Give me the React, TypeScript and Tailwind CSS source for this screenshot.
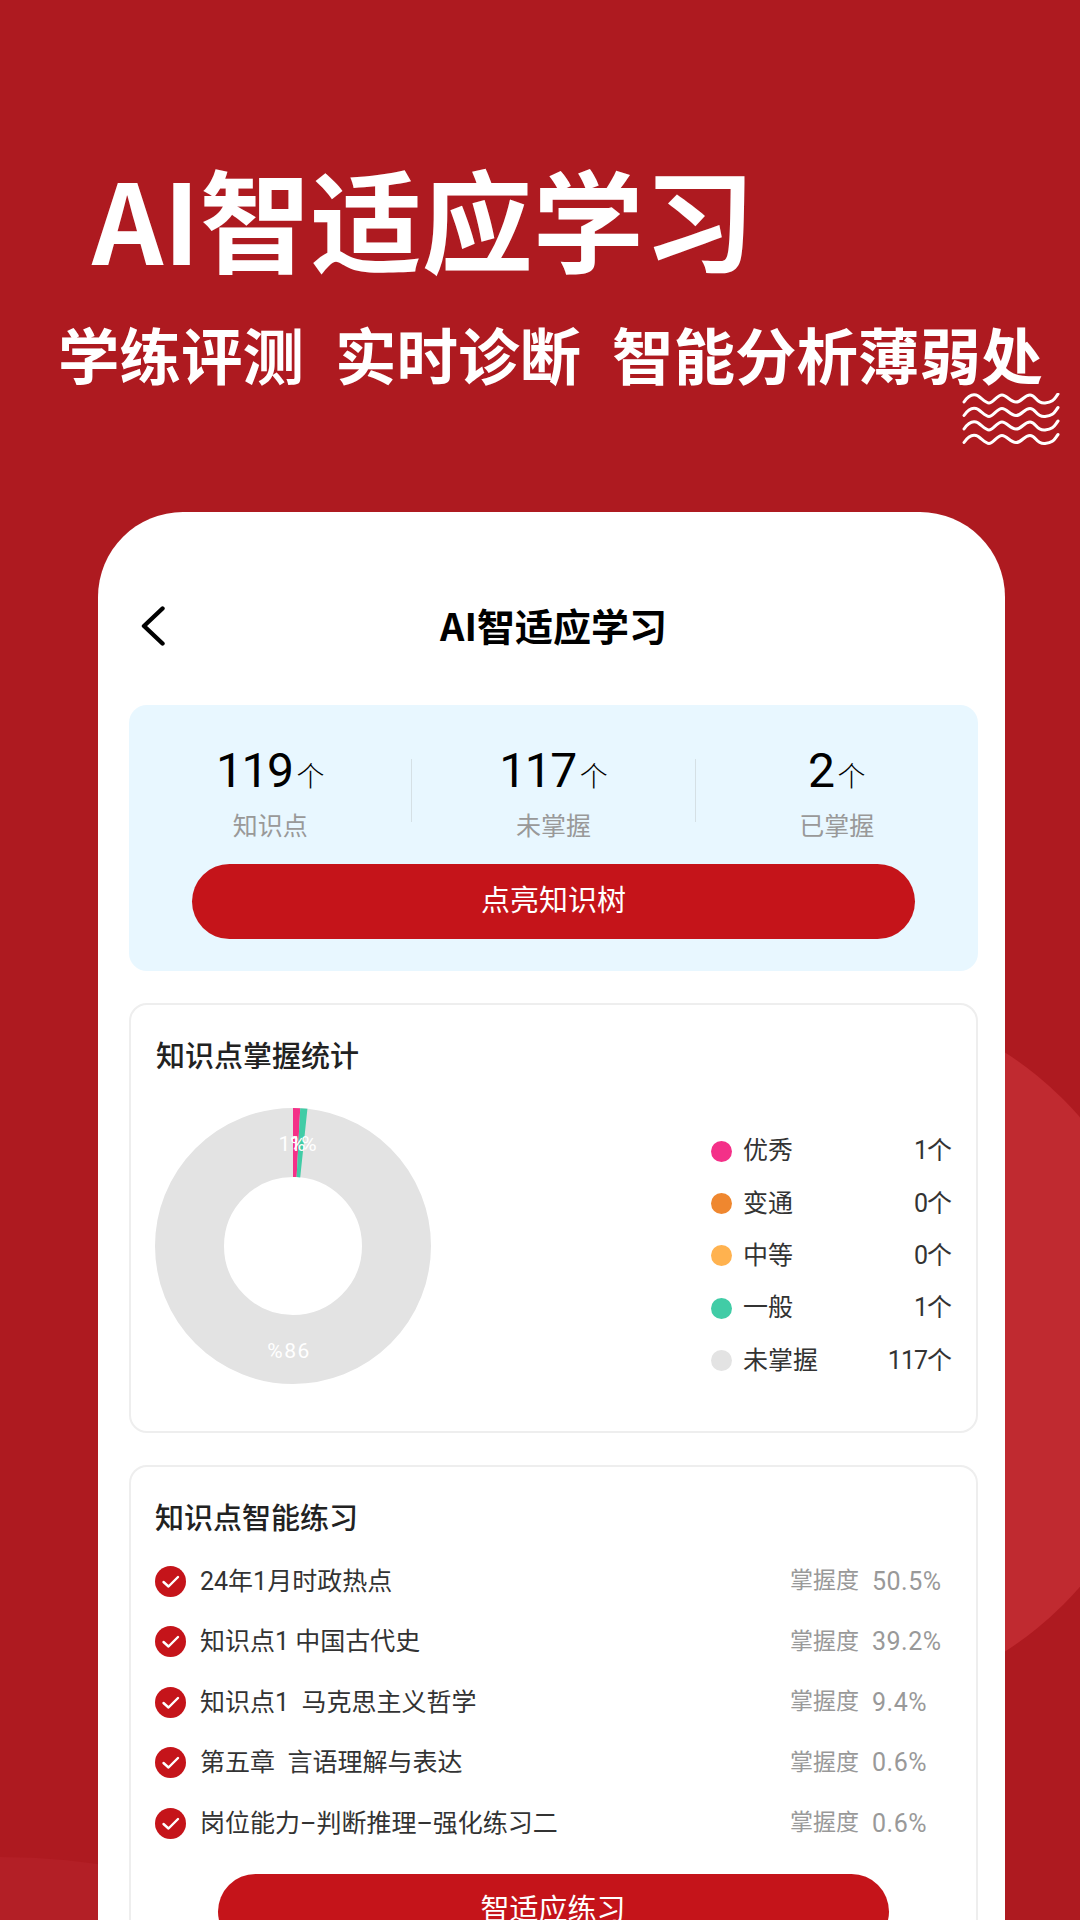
const LEGEND = [
  { label: '优秀', value: '1个', dot: 'bg-[#f43088]' },
  { label: '变通', value: '0个', dot: 'bg-[#ef872f]' },
  { label: '中等', value: '0个', dot: 'bg-[#ffb24f]' },
  { label: '一般', value: '1个', dot: 'bg-[#41cca6]' },
  { label: '未掌握', value: '117个', dot: 'bg-[#e3e3e3]' },
]

const PRACTICE = [
  { name: '24年1月时政热点', rate: '50.5%' },
  { name: '知识点1 中国古代史', rate: '39.2%' },
  { name: '知识点1  马克思主义哲学', rate: '9.4%' },
  { name: '第五章  言语理解与表达', rate: '0.6%' },
  { name: '岗位能力–判断推理–强化练习二', rate: '0.6%' },
]

const STATS = [
  { value: '119', label: '知识点' },
  { value: '117', label: '未掌握' },
  { value: '2', label: '已掌握' },
]

function wedge(from: number, to: number) {
  const C = 138
  const R = 138
  const r = 69
  const pt = (rad: number, deg: number) => {
    const a = (deg * Math.PI) / 180
    return `${C + rad * Math.sin(a)} ${C - rad * Math.cos(a)}`
  }
  return `M${pt(r, from)} L${pt(R, from)} A${R} ${R} 0 0 1 ${pt(R, to)} L${pt(r, to)} A${r} ${r} 0 0 0 ${pt(r, from)}Z`
}

function Donut() {
  return (
    <svg width="276" height="276" viewBox="0 0 276 276" className="-ml-px shrink-0">
      <circle cx="138" cy="138" r="103.5" fill="none" stroke="#e3e3e3" strokeWidth="69" />
      <path d={wedge(0, 3)} fill="#f43088" />
      <path d={wedge(3, 6)} fill="#41cca6" />
      <g fill="#fff" fontSize="21" textAnchor="middle" fontFamily="Roboto, sans-serif">
        <text x="137" y="43">1%</text>
        <text x="148" y="43">1%</text>
        <text x="134" y="250" letterSpacing="1.5">%86</text>
      </g>
    </svg>
  )
}

function CheckBadge() {
  return (
    <svg width="31" height="31" viewBox="0 0 31 31" className="shrink-0">
      <circle cx="15.5" cy="15.5" r="15.5" fill="#c5141a" />
      <path d="M8.5 16 L13.5 20.5 L23 11" fill="none" stroke="#fff" strokeWidth="2.4" strokeLinecap="round" strokeLinejoin="round" />
    </svg>
  )
}

function Waves() {
  return (
    <svg width="98" height="56" viewBox="0 0 98 56" className="ml-auto mr-[20px] mt-[4px] block" fill="none" stroke="#fff" strokeWidth="3" strokeLinecap="round">
      {[0, 13.5, 27, 40.5].map((y) => (
        <path key={y} transform={`translate(2 ${y})`} d="M0 9 C4 3,8 1,12 2 S21 10,25 10 S33 2,38 2 S46 9,52 9 S60 2,66 2 S72 11,81 10 S90 6,94 1" />
      ))}
    </svg>
  )
}

export default function App() {
  return (
    <div className="relative h-[1920px] w-[1080px] overflow-hidden bg-[#ae1a20] font-['Roboto','Noto_Sans_CJK_SC',sans-serif]">
      {/* background shapes */}
      <div className="absolute left-[454px] top-[995px] h-[714px] w-[714px] rounded-full bg-[#c02a30]" />
      <div className="absolute left-[-686px] top-[1857px] h-[1372px] w-[1372px] rounded-full bg-[#b31f26]" />

      <div className="relative flex flex-col">
        <h1 className="ml-[92px] mt-[147px] h-[140px] whitespace-nowrap font-['Noto_Sans_CJK_SC',sans-serif] text-[111px] font-bold leading-[140px] text-white">
          AI智适应学习
        </h1>
        <div className="ml-[58px] mt-[32px] flex h-[70px] gap-[31px] whitespace-nowrap font-['Noto_Sans_CJK_SC',sans-serif] text-[61.5px] font-bold leading-[70px] text-white">
          <span>学练评测</span>
          <span>实时诊断</span>
          <span>智能分析薄弱处</span>
        </div>
        <Waves />

        {/* phone card */}
        <div className="ml-[98px] mt-[63px] h-[1500px] w-[907px] rounded-t-[85px] bg-white pl-[31px] pr-[27px]">
          <div className="relative flex h-[193px] items-center justify-center pt-[32px] text-[38px] font-bold text-black">
            <svg width="24" height="40" viewBox="0 0 24 40" className="absolute left-[12px] top-[94px]" fill="none" stroke="#000" strokeWidth="4.4" strokeLinecap="round" strokeLinejoin="round">
              <path d="M21.5 2.5 L3 20 L21.5 37.5" />
            </svg>
            <span className="font-['Noto_Sans_CJK_SC',sans-serif]">AI智适应学习</span>
          </div>

          <div className="flex h-[266px] flex-col items-center rounded-[18px] bg-[#e8f7ff] pt-[41px]">
            <div className="flex w-full items-start">
              {STATS.map((s, i) => (
                <div key={s.label} className="contents">
                  {i > 0 && <div className="mt-[13px] h-[63px] w-px shrink-0 bg-[#d5e0e5]" />}
                  <div className="flex flex-1 flex-col items-center">
                    <div className="flex h-[50px] items-baseline">
                      <span className="text-[48px] leading-[50px] tracking-[-1.5px] text-black">{s.value}</span>
                      <span className="ml-[4px] text-[28px] font-light leading-[28px] text-black">个</span>
                    </div>
                    <span className="mt-[15px] text-[25px] leading-[32px] text-[#999]">{s.label}</span>
                  </div>
                </div>
              ))}
            </div>
            <button className="mt-[21px] h-[75px] w-[723px] rounded-full bg-[#c5141a] text-[29px] text-white">点亮知识树</button>
          </div>

          <div className="mt-[32px] h-[430px] rounded-[18px] border-2 border-[#eeeeee] pl-[25px] pr-[25px] pt-[32px]">
            <h2 className="text-[29px] font-medium leading-[40px] text-[#222]">知识点掌握统计</h2>
            <div className="mt-[31px] flex items-start">
              <Donut />
              <div className="ml-auto mt-[17px] w-[240px]">
                {LEGEND.map((l) => (
                  <div key={l.label} className="flex h-[52.3px] items-center text-[25px] text-[#333]">
                    <span className={`h-[21px] w-[21px] rounded-full ${l.dot}`} />
                    <span className="ml-[11px]">{l.label}</span>
                    <span className="ml-auto tracking-[-1px]">{l.value}</span>
                  </div>
                ))}
              </div>
            </div>
          </div>

          <div className="mt-[32px] rounded-t-[18px] border-2 border-b-0 border-[#eeeeee] pl-[24px] pr-[25px] pt-[32px]">
            <h2 className="text-[29px] font-medium leading-[40px] text-[#222]">知识点智能练习</h2>
            <div className="mt-[12px]">
              {PRACTICE.map((p) => (
                <div key={p.rate + p.name} className="flex h-[60.5px] items-center">
                  <CheckBadge />
                  <span className="ml-[14px] whitespace-pre text-[25px] text-[#333]">{p.name}</span>
                  <div className="ml-auto flex w-[161px] shrink-0 items-center text-[23px] text-[#999]">
                    <span>掌握度</span>
                    <span className="ml-[13px] text-[25px] tracking-[0.5px]">{p.rate}</span>
                  </div>
                </div>
              ))}
            </div>
            <button className="mx-auto mt-[20px] block h-[75px] w-[671px] rounded-full bg-[#c5141a] text-[29px] text-white">智适应练习</button>
          </div>
        </div>
      </div>
    </div>
  )
}
